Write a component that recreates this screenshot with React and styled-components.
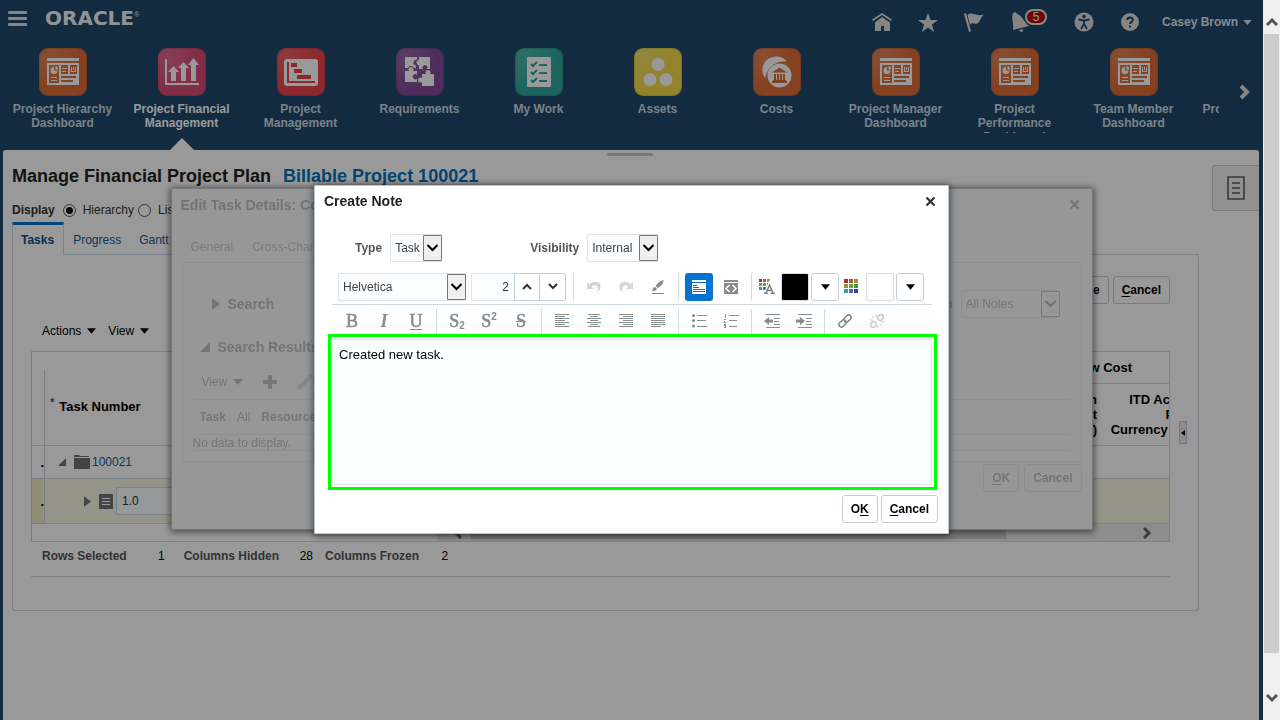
import React from "react";
import styled, { createGlobalStyle, css } from "styled-components";

const Global = createGlobalStyle`
  * { box-sizing: border-box; }
  html, body { margin: 0; }
  body { font: 12px/16px "Liberation Sans", Arial, sans-serif; color: #333; background: #1e486b; }
  button, input, select, textarea { font: inherit; color: inherit; margin: 0; }
  button { cursor: pointer; padding: 0; border: 0; background: none; }
  svg { display: block; flex: none; }
  a { color: inherit; text-decoration: none; }
`;

/* ---------- frame ---------- */
const Frame = styled.div`display: flex; min-height: 100vh;`;
const Shell = styled.div`flex: 1; min-width: 0; display: flex; flex-direction: column; background: #1e486b;`;
const ScrollRail = styled.aside`
  position: sticky; top: 0; width: 17px; height: 100vh; padding: 0 1px; background: #f0f0f0;
  display: flex; flex-direction: column; align-items: center;
`;
const RailArrow = styled.button`
  height: 34px; width: 15px; display: grid; place-items: center; color: #555;
  padding: ${(p) => (p.$down ? "0 0 10px" : "10px 0 0")};
`;
const RailThumb = styled.div`flex: 19; width: 15px; background: #cdcdcd;`;
const RailRest = styled.div`flex: 1;`;

/* ---------- header ---------- */
const TopBar = styled.header`display: flex; justify-content: space-between; height: 44px; padding: 0 11px 0 8px; color: #fff;`;
const Brand = styled.div`display: flex; align-items: center; gap: 18px; height: 36px;`;
const Wordmark = styled.span`
  font: bold 20px/20px "DejaVu Sans", sans-serif; color: #f4f4f4;
  sup { font: 7px/8px "Liberation Sans", sans-serif; vertical-align: 8px; }
`;
const Tools = styled.div`display: flex; align-items: center; color: #dedede;`;
const Tool = styled.button`position: relative; width: 46px; height: 28px; display: grid; place-items: center;`;
const BellTool = styled(Tool)`margin-right: 18px;`;
const Badge = styled.span`
  position: absolute; left: 28px; top: 1px; width: 22px; height: 16px; border: 2px solid #e4e4e4; border-radius: 8px;
  background: #c00000; color: #fff; line-height: 12px; text-align: center;
`;
const User = styled.button`
  display: flex; align-items: center; gap: 5px; margin-left: 9px; font-weight: bold; color: #dde6ee; white-space: nowrap;
`;
const Springboard = styled.nav`display: flex; height: 106px; padding-left: 3px;`;
const AppStrip = styled.div`flex: 1; min-width: 0; display: flex; overflow: hidden;`;
const AppLink = styled.a`
  flex: none; width: 119px; display: flex; flex-direction: column; align-items: center; padding-top: 4px;
  color: ${(p) => (p.$active ? "#fff" : "#ccd8e2")};
`;
const Tile = styled.span`
  width: 48px; height: 48px; border-radius: 9px; display: grid; place-items: center; color: #fff;
  background: radial-gradient(circle at 20% 20%, rgba(255,255,255,.16), rgba(255,255,255,0) 60%), ${(p) => p.$color};
  box-shadow: inset 0 0 2px rgba(0,0,0,.35);
`;
const AppName = styled.span`
  width: 104px; max-height: 31px; margin-top: 6px; overflow: hidden; text-align: center; font-weight: bold; line-height: 14px;
`;
const Callout = styled.span`
  margin-top: 8px; border: 12px solid transparent; border-top: 0; border-bottom-color: #fff;
`;
const More = styled.button`width: 44px; height: 96px; padding-left: 6px; display: grid; place-items: center; color: #dedede;`;

/* ---------- page ---------- */
const Page = styled.main`
  position: relative; flex: 1; display: flex; margin: 0 4px 0 3px; padding-left: 9px; background: #fff;
  border-radius: 3px 3px 0 0;
`;
const Grip = styled.span`
  position: absolute; top: 3px; left: 50%; width: 46px; height: 3px; margin-left: -24px; border-radius: 2px; background: #c6c8d2;
`;
const Work = styled.div`flex: 1; min-width: 0; padding-top: 15px;`;
const Side = styled.div`width: 60px; padding: 15px 0 0 13px;`;
const DrawerTab = styled.button`
  width: 100%; height: 46px; display: grid; place-items: center; border: 1px solid #c9d0d8; border-right: 0;
  border-radius: 3px 0 0 3px; background: #f0f0f0; color: #7b7f83;
`;
const Title = styled.h1`
  margin: 0; display: flex; gap: 12px; font-size: 18px; line-height: 22px; color: #222;
  span { color: #0572bc; }
`;
const DisplayRow = styled.div`display: flex; align-items: center; height: 20px; margin-top: 13px; font-weight: bold;`;
const RadioLabel = styled.label`
  display: flex; align-items: center; gap: 7px; margin-left: 8px; font-weight: normal;
  & + & { margin-left: 4px; }
`;
const Radio = styled.input`
  appearance: none; width: 13px; height: 13px; border: 1px solid #555; border-radius: 50%; background: #fff;
  &:checked { background: radial-gradient(circle, #111 0 3px, #fff 4px); }
`;
const TabRow = styled.div`
  display: flex; height: 33px; margin-top: 2px;
  &::after { content: ""; flex: 1; border-bottom: 1px solid #cdd9e3; }
`;
const Tab = styled.button`
  padding: 0 9px; color: #145c9e; border-top: 3px solid transparent; border-bottom: 1px solid #cdd9e3;
  ${(p) => p.$active && css`
    padding: 0 9px 0 8px; font-weight: bold; color: #0b4f8c; border: 1px solid #cdd9e3; border-bottom: 0; border-top: 3px solid #0572ce;
  `}
`;
const Panel = styled.section`
  display: flex; border: 1px solid #cdd9e3; border-top: 0; border-radius: 0 3px 3px 3px; padding-left: 18px;
`;
const PanelBody = styled.div`flex: 1; min-width: 0; padding: 21px 0 33px;`;
const PanelSide = styled.div`width: 28px; display: flex; align-items: center; padding-left: 9px;`;
const Collapse = styled.button`width: 8px; height: 23px; border: 1px solid #bcc6d0; background: #ececec; display: grid; place-items: center; color: #000;`;
const Actions = styled.div`display: flex; justify-content: flex-end; gap: ${(p) => p.$gap}px;`;
const Button = styled.button`
  height: 28px; padding: 0 8px; border: 1px solid ${(p) => (p.$faded ? "#ececec" : "#c3ccd6")}; border-radius: 3px;
  font-weight: bold; color: ${(p) => (p.$faded ? "#c2c2c2" : "#000")};
  u { text-underline-offset: 2px; }
`;
const MenuBar = styled.div`display: flex; gap: 12px; height: 16px; padding-left: 11px; margin: 19px 0 12px;`;
const MenuButton = styled.button`display: flex; align-items: center; gap: 6px; color: ${(p) => (p.$faded ? "#c2c2c2" : "#000")};`;

/* ---------- task table ---------- */
const line = "1px solid #d3dbe2";
const Grid = styled.div`border: ${line}; border-left-color: #c6ced6; overflow: hidden;`;
const Tasks = styled.table`
  width: calc(100% + 32px); border-collapse: separate; border-spacing: 0; table-layout: fixed; line-height: 15px;
`;
const Head = styled.th`
  padding: 0 5px; font-size: 13px; color: #000; border-bottom: ${line}; text-align: ${(p) => p.$align || "left"};
  white-space: nowrap; height: ${(p) => p.$h}px;
`;
const KeyHead = styled(Head)`padding-top: 16px;`;
const GroupHead = styled(Head)`padding-left: 27px;`;
const LastHead = styled(Head)`padding-right: 8px;`;
const CornerHead = styled(Head)`
  padding: 0; background: linear-gradient(#c9d3dc, #c9d3dc) right bottom / 1px calc(100% - 18px) no-repeat;
`;
const Required = styled.sup`margin-right: 5px; color: #145c9e; font-weight: bold; line-height: 8px;`;
const Row = styled.tr`background: ${(p) => (p.$selected ? "#f7f7e3" : "#fff")};`;
const Mark = styled.th`
  padding: 0; height: ${(p) => p.$h}px; border: solid #c9d3dc; border-width: 0 1px 1px 0; text-align: right; color: #000; font-size: 13px;
  background: ${(p) => (p.$selected ? "#eeeec9" : "#fff")};
`;
const Cell = styled.td`padding: 0 0 0 ${(p) => p.$indent || 0}px; border-bottom: ${line};`;
const Node = styled.div`display: flex; align-items: center; color: #6f7377; a { color: #145c9e; }`;
const NodeGap = styled.span`width: ${(p) => p.$w}px;`;
const NumberInput = styled.input`
  width: 120px; height: 28px; margin-left: 3px; padding: 0 5px; border: 1px solid #ccd9e4; border-radius: 2px; background: #fcfdff; color: #333;
`;
const HScroll = styled.div`display: flex; height: 17px; color: #666;`;
const HBlank = styled.span`flex: 405;`;
const HTrack = styled.div`flex: 732; display: flex; background: #ebebeb;`;
const HArrow = styled.button`width: ${(p) => p.$w}px; padding-left: ${(p) => p.$pad || 0}px; display: grid; place-items: center;`;
const HThumb = styled.span`flex: 535; height: 15px; background: #c8c8c8;`;
const HRest = styled.span`flex: 119;`;
const Status = styled.dl`
  display: flex; align-items: center; margin: 0; height: 35px; padding: 0 0 7px 11px; border-bottom: 1px solid #cdd9e3;
  dt { font-weight: bold; color: #555; }
  dd { margin: 0; color: #000; width: 57px; text-align: right; padding-right: 19px; }
  dd + dt + dd { width: 46px; padding-right: 12px; }
  dd + dt + dd + dt + dd { width: 29px; padding: 0; }
`;

/* ---------- dialogs ---------- */
const Layer = styled.div`
  position: fixed; inset: 0 17px 0 0; padding-bottom: 2px; display: grid; place-items: center;
  background: ${(p) => (p.$dim ? "rgba(0,0,0,.4)" : "transparent")};
`;
const Dialog = styled.section`
  width: ${(p) => p.$width}px; max-width: 100%; border: 1px solid ${(p) => (p.$faded ? "#c3c7cb" : "#bac8d4")};
  border-radius: 1px; background: ${(p) => (p.$faded ? "#fcfcfc" : "#fff")};
  color: ${(p) => (p.$faded ? "#c6c6c6" : "#333")}; padding: 0 10px ${(p) => p.$bottom}px 9px;
  box-shadow: 0 1px 7px 1px rgba(0,0,0,.55);
`;
const DialogHead = styled.header`display: flex; justify-content: space-between; align-items: center; height: 31px; padding-right: 2px;`;
const DialogTitle = styled.h2`margin: 0; font-size: 14px; line-height: 18px; color: ${(p) => (p.$faded ? "#c2c2c2" : "#222")};`;
const Close = styled.button`width: 11px; height: 11px; color: ${(p) => (p.$faded ? "#c2c2c2" : "#333")};`;
const FadedTabs = styled.div`display: flex; gap: 19px; height: 30px; align-items: center; margin-top: 12px; padding-left: 10px; color: #c9d0da;`;
const FadedPanel = styled.div`border: 1px solid #f0f0f0; border-radius: 3px; padding: 27px 10px 10px; margin: 0 0 2px 1px;`;
const Fold = styled.h3`margin: 0; display: flex; align-items: center; gap: 8px; font-size: 14px; line-height: 20px; color: #c2c2c2;`;
const ResultsFold = styled(Fold)`padding-left: 7px;`;
const SearchRow = styled.div`display: flex; justify-content: space-between; height: 28px; padding: 0 11px 0 19px; margin-bottom: 19px;`;
const Field = styled.label`
  display: flex; align-items: center; gap: 8px; font-weight: bold; color: ${(p) => (p.$faded ? "#c6c6c6" : "#555")};
`;
const SelectBox = styled.span`
  position: relative; width: ${(p) => p.$width}px; height: 28px; font-weight: normal;
  svg { position: absolute; right: 0; top: 1px; pointer-events: none; }
`;
const Select = styled.select`
  appearance: none; width: 100%; height: 28px; padding: 0 20px 0 4px; border: 1px solid ${(p) => (p.$faded ? "#ededed" : "#dce2e8")};
  border-radius: 2px; background: ${(p) => (p.$faded ? "#fcfcfc" : "#fcfdff")}; color: ${(p) => (p.$faded ? "#c6c6c6" : "#444")};
`;
const FadedBar = styled.div`display: flex; align-items: center; gap: 20px; height: 35px; margin-top: 8px; padding-left: 9px; border-bottom: 1px solid #f0f0f0;`;
const FadedRow = styled.div`display: flex; align-items: center; gap: 11px; height: ${(p) => p.$h}px; padding-left: ${(p) => p.$pad || 0}px; border-bottom: 1px solid #f0f0f0;`;

const Fields = styled.div`display: flex; gap: 88px; padding: 17px 0 11px 31px;`;
const Editor = styled.div`padding: 0 6px 0 8px;`;
const ToolRow = styled.div`
  display: flex; align-items: center; height: ${(p) => p.$h}px; padding: ${(p) => p.$pad || 0};
  border-bottom: ${(p) => (p.$ruled ? "1px solid #cfdae3" : "0")}; color: #868b90;
`;
const Rule = styled.span`width: 1px; height: ${(p) => p.$h}px; margin: 0 4px; background: #cfdae3;`;
const Stepper = styled.div`
  display: flex; margin: 0 3px 0 5px; height: 28px;
  input { width: 43px; padding: 0 5px; text-align: right; border: 1px solid #dce2e8; border-right: 0; border-radius: 2px 0 0 2px; background: #fcfdff; color: #333; }
  button { width: 26px; border: 1px solid #c3d0db; display: grid; place-items: center; color: #333; }
  button + button { border-left: 0; border-radius: 0 3px 3px 0; }
`;
const Mode = styled.button`
  width: 28px; height: 28px; margin: 0 2px; display: grid; place-items: center; border-radius: 3px;
  ${(p) => p.$on && css`background: #0572ce; color: #fff;`}
`;
const Swatch = styled.button`width: 28px; height: 28px; margin: 0 2px 0 6px; border: 1px solid #dcdfe2; border-radius: 2px; background: ${(p) => p.$color};`;
const Drop = styled.button`width: 28px; height: 28px; border: 1px solid #c3d0db; border-radius: 3px; display: grid; place-items: center; color: #000;`;
const Format = styled.button`
  width: 32px; height: 28px; display: grid; place-items: center; opacity: ${(p) => (p.$off ? 0.45 : 1)};
`;
const Glyph = styled.span`
  font: ${(p) => (p.$italic ? "italic bold" : "normal")} 18px/20px "Liberation Serif", serif; -webkit-text-stroke: ${(p) => (p.$italic ? 0 : "0.6px")};
  text-decoration: ${(p) => p.$line || "none"}; text-decoration-thickness: 1px; text-underline-offset: 2px;
  sub, sup { font: bold 10px/8px "Liberation Sans", sans-serif; -webkit-text-stroke: 0; }
  sub { vertical-align: -2px; } sup { vertical-align: 7px; }
`;
const Highlight = styled.div`margin: 0 1px 5px 4px; border: 3px solid #0f0; padding: 2px 2px 2px 1px; display: flex;`;
const NoteText = styled.textarea`
  flex: 1; min-width: 0; height: 146px; padding: 7px 6px; resize: none; border: 1px solid #dfe3e8; border-radius: 2px; background: #fcfdff;
  font-size: 13px; line-height: 16px; color: #000; outline: 0;
`;

/* ---------- drawings ---------- */
const Caret = ({ w = 10, h = 6 }) => (
  <svg width={w} height={h} viewBox="0 0 10 6"><path d="M0 0h10L5 6z" fill="currentColor" /></svg>
);
const Chevron = ({ d, w = 12, h = 12, s = 2 }) => (
  <svg width={w} height={h} viewBox={`0 0 ${w} ${h}`} fill="none" stroke="currentColor" strokeWidth={s}><path d={d} /></svg>
);
const ComboArrow = ({ faded }) => (
  <svg width="19" height="26" viewBox="0 0 19 26">
    <path d="M.5.5h18v25H.5z" fill={faded ? "#fcfcfc" : "#efefef"} stroke={faded ? "#ccc" : "#777"} />
    <path d="M4.500 10l5 5 5-5" fill="none" stroke={faded ? "#bbb" : "#000"} strokeWidth="2" />
  </svg>
);
const Cross = () => (
  <svg width="11" height="11" viewBox="0 0 11 11"><path d="M1.500 1.500l8 8m0-8l-8 8" stroke="currentColor" strokeWidth="2.200" /></svg>
);
const RightTri = () => <svg width="8" height="12" viewBox="0 0 8 12"><path d="M0 0v12l8-6z" fill="currentColor" /></svg>;
const OpenTri = ({ s = 8 }) => <svg width={s} height={s} viewBox="0 0 8 8"><path d="M8 0v8H0z" fill="currentColor" /></svg>;

const DashIcon = () => (
  <svg width="32" height="28" viewBox="0 0 32 28" fill="currentColor">
    <path d="M0 0h32v3H0z" />
    <path fillRule="evenodd" d="M0 5h32v22H0zM2 7v18h10V7zM14 7v9h7V7zM23 7v9h7V7zM14 18v2h15v-2zM14 22v2h12v-2z" />
    <path d="M7 9a3.500 3.500 0 1 0 3.500 3.500H7zM8.500 8v3.500H11A3 3 0 0 0 8.500 8zM4 19h6v1H4zM4 22h6v1H4zM15 10h5v1h-5zM15 13h4v1h-4zM24 9h1v4h3V9h1v5h-5zM26 9h1v3h-1z" />
  </svg>
);
const ArrowsIcon = () => (
  <svg width="34" height="28" viewBox="0 0 34 28" fill="currentColor">
    <path d="M0 1h2v24h32v2H0zM6 23V14H3l5.500-6L14 14h-3v9zM16 23V10h-3l5.500-6L24 10h-3v13zM26 23V7h-3l5.500-7L34 7h-3v16z" />
  </svg>
);
const GanttIcon = () => (
  <svg width="34" height="27" viewBox="0 0 34 27">
    <rect width="34" height="27" rx="3" fill="#fff" />
    <path d="M3 3h2v19h26v2H3zM7 4h6v4H7zM10 10h8v4h-8zM13 16h14v4H13z" fill="#e9434b" />
  </svg>
);
const PuzzleIcon = () => (
  <svg width="30" height="30" viewBox="0 0 30 30" fill="currentColor">
    <path d="M0 0h12v2.500a3 3 0 0 0-1 6V11H9a3.200 3.200 0 0 0-6 0H0z" />
    <path d="M14 0h11v12h-3a2.500 2.500 0 1 0-4 0h-4V8.500a3 3 0 0 1-1-5.500h1z" />
    <path d="M0 14h4a2.500 2.500 0 1 1 4 0h4v4a2.500 2.500 0 1 0 0 3.500V25H0z" />
    <path d="M17 17h4a2.500 2.500 0 1 1 4 0h4v12H17v-4a2.500 2.500 0 1 1 0-4z" />
  </svg>
);
const CheckIcon = () => (
  <svg width="24" height="30" viewBox="0 0 24 30">
    <rect width="24" height="30" rx="1" fill="#fff" />
    <path d="M4 7l2 2 4-4M4 15l2 2 4-4M4 23l2 2 4-4M12 8h8M12 16h8M12 24h8" fill="none" stroke="#2fa79e" strokeWidth="2" />
  </svg>
);
const AssetsIcon = () => (
  <svg width="30" height="28" viewBox="0 0 30 28" fill="currentColor"><circle cx="15" cy="6.500" r="6.500" /><circle cx="7" cy="21.500" r="6.500" /><circle cx="23" cy="21.500" r="6.500" /></svg>
);
const CostsIcon = () => (
  <svg width="30" height="32" viewBox="0 0 30 32">
    <path d="M3 22A13 13 0 0 1 25 6C15 4 6 10 3 22z" fill="#fff" />
    <circle cx="17.500" cy="19.500" r="12" fill="#fff" />
    <path d="M10 16.500l7.500-5 7.500 5zM12 18h2v6h-2zM15 18h2v6h-2zM18 18h2v6h-2zM21 18h2v6h-2zM11 24h13v1h1v2H10v-2h1z" fill="#de6b35" />
  </svg>
);
const HomeIcon = () => (
  <svg width="20" height="19" viewBox="0 0 20 19" fill="currentColor"><path d="M10 0l10 6.500-1 1.500-9-6-9 6-1-1.500z" /><path d="M10 4l8 5.500V18h-6v-5H9v5H3V9.500z" /></svg>
);
const StarIcon = () => (
  <svg width="20" height="19" viewBox="0 0 20 19" fill="currentColor"><path d="M10 0l2.500 7H20l-6 4.500L16 19l-6-4.500L4 19l2-7.500L0 7h7.500z" /></svg>
);
const FlagIcon = () => (
  <svg width="20" height="19" viewBox="0 0 20 19" fill="currentColor"><path d="M0 1l2-1 5 18-2 1zM3.500 2C8-2 11 4 20 1.500c-4 3-3 7-7 9-3 1-5-2-7 1.500z" /></svg>
);
const BellIcon = () => (
  <svg width="20" height="20" viewBox="0 0 20 20" fill="currentColor"><path d="M3 1c2-2 4 0 4 1 5 1 7 8 12 12L3 18C4 12 1 6 3 1zM9 18l4-1c1 3-3 4-4 1z" /></svg>
);
const AccessIcon = () => (
  <svg width="20" height="20" viewBox="0 0 20 20">
    <circle cx="10" cy="10" r="9.500" fill="currentColor" /><circle cx="10" cy="4.500" r="1.800" fill="#1e486b" />
    <path d="M4.500 7.500L10 8.500l5.500-1M10 8v4l-3 5M10 12l3 5" fill="none" stroke="#1e486b" strokeWidth="1.800" />
  </svg>
);
const HelpIcon = () => (
  <svg width="18" height="18" viewBox="0 0 18 18">
    <circle cx="9" cy="9" r="9" fill="currentColor" />
    <path d="M6.300 7c0-3.500 5.500-3.500 5.500 0 0 2-2.800 2-2.800 4M9 12.500v2" fill="none" stroke="#1e486b" strokeWidth="2" />
  </svg>
);
const Lines = ({ rows }) => (
  <svg width="14" height="14" viewBox="0 0 14 14" fill="currentColor">
    {rows.map(([x, w], i) => <rect key={i} x={x} y={i * 2} width={w} height="1" />)}
  </svg>
);
const DotGrid = ({ letter }) => {
  const c = ["#9b3535", "#a5603a", "#a38c34", "#8b9838", "#7c9a38", "#3d9b3d", "#3a9b98", "#3b6fae", "#3a3fa0"];
  return (
    <svg width="16" height="15" viewBox="0 0 16 15">
      {c.map((f, i) => {
        const s = letter ? 3 : 4, p = letter ? 4 : 5;
        if (letter && i === 8) return null;
        return <rect key={f} x={(i % 3) * p} y={Math.floor(i / 3) * p} width={s} height={s} fill={f} />;
      })}
      {letter && <path d="M7 14l3.500-8 3.500 8" fill="none" stroke="#fff" strokeWidth="4" />}
      {letter && <path d="M5 14.500h4M11.500 14.500H16M7 14l3.500-8 3.500 8M8 11.500h5" fill="none" stroke="#777c81" strokeWidth="1.500" />}
    </svg>
  );
};
const UndoIcon = ({ flip }) => (
  <svg width="14" height="14" viewBox="0 0 14 14"><g transform={flip ? "matrix(-1 0 0 1 14 0)" : undefined}>
    <path d="M0 2v7h7L4.500 6.500C7 4 11 5 11 9l-1 4c6-5 4-12-3-11-2 0-3.500 1-4.500 2.500z" fill="#d3d5d7" /></g></svg>
);
const BrushIcon = () => (
  <svg width="14" height="14" viewBox="0 0 14 14" fill="currentColor"><path d="M12.500 0c0 4-3 6-5.500 8L4.500 6c2-3 4-5 8-6zM4 7l2 2c-1 2-3 2-5 2 1-2 1-4 3-4zM1 13h12v1H1z" /></svg>
);
const RichIcon = () => (
  <svg width="14" height="14" viewBox="0 0 14 14" fill="currentColor"><path fillRule="evenodd" d="M0 0h14v2H0zM0 3h14v11H0zM1 5v1h4V5zM1 7v1h6V7zM1 9v1h12V9zM1 11v1h12v-1z" /></svg>
);
const CodeIcon = () => (
  <svg width="14" height="14" viewBox="0 0 14 14"><path d="M0 0h14v2H0zM0 3h14v11H0z" fill="currentColor" /><path d="M5.500 5L2 8.500 5.500 12M8.500 5L12 8.500 8.500 12" fill="none" stroke="#fff" strokeWidth="1.500" /></svg>
);
const ListIcon = ({ num }) => (
  <svg width="15" height="14" viewBox="0 0 15 14" fill="currentColor">
    <path d={num ? "M5 1h10v1H5zM5 6h8v1H5zM5 12h8v1H5z" : "M5 1h10v1H5zM5 6h9v1H5zM5 12h10v1H5z"} />
    {num ? <path d="M1 0h1v4H1zM0 5h2v1H1v2h1v1H0V7h1V6H0zM0 10h2v4H0v-1h1v-1H0z" />
      : <><circle cx="1.500" cy="1.500" r="1.500" /><circle cx="1.500" cy="6.500" r="1.500" /><circle cx="1.500" cy="12" r="1.500" /></>}
  </svg>
);
const IndentIcon = ({ out }) => (
  <svg width="16" height="14" viewBox="0 0 16 14" fill="currentColor">
    <path d="M2 0h14v1H2zM10 4h6v1h-6zM10 7h5v1h-5zM10 10h6v1h-6zM2 13h14v1H2z" />
    <path d={out ? "M0 7l5-4v2.500h4v3H5V11z" : "M9 7L4 3v2.500H0v3h4V11z"} />
  </svg>
);
const LinkIcon = ({ broken }) => (
  <svg width="14" height="14" viewBox="0 0 14 14" fill="none" stroke="currentColor" strokeWidth="1.600">
    <g transform="rotate(-45 7 7)">
      <rect x={broken ? -1 : -0.5} y="4.500" width={broken ? 6 : 8} height="5" rx="2.500" />
      <rect x={broken ? 9 : 6.5} y="4.500" width={broken ? 6 : 8} height="5" rx="2.500" />
    </g>
    {broken ? <path d="M2 2l2 2M6 0v3M0 6h3M12 12l-2-2M8 14v-3M14 8h-3" strokeWidth="1" /> : null}
  </svg>
);
const FolderIcon = () => <svg width="16" height="14" viewBox="0 0 16 14" fill="currentColor"><path d="M0 0h5l1 1h9v1H0zM0 3h16v11H0z" /></svg>;
const TaskIcon = () => <svg width="14" height="15" viewBox="0 0 14 15"><path d="M0 0h14v15H0z" fill="currentColor" /><path d="M3 4.500h8M3 7.500h8M3 10.500h8" stroke="#fff" /></svg>;
const DrawerIcon = () => <svg width="18" height="24" viewBox="0 0 18 24" fill="none" stroke="currentColor" strokeWidth="2"><path d="M1 1h16v22H1zM5 7h8M5 12h8M5 17h8" /></svg>;
const PlusIcon = () => <svg width="14" height="14" viewBox="0 0 14 14"><path d="M7 0v14M0 7h14" stroke="#c6c6c6" strokeWidth="4" /></svg>;
const PencilIcon = () => <svg width="16" height="16" viewBox="0 0 16 16" fill="#e2e2e2"><path d="M0 16l1-4L10 3l3 3-9 9zM11 2l2-2 3 3-2 2z" /></svg>;

const APPS = [
  ["Project Hierarchy Dashboard", "#de6b35", DashIcon],
  ["Project Financial Management", "#da4b78", ArrowsIcon],
  ["Project Management", "#e9434b", GanttIcon],
  ["Requirements", "#824b96", PuzzleIcon],
  ["My Work", "#2fa79e", CheckIcon],
  ["Assets", "#f5da48", AssetsIcon],
  ["Costs", "#de6b35", CostsIcon],
  ["Project Manager Dashboard", "#de6b35", DashIcon],
  ["Project Performance Dashboard", "#de6b35", DashIcon],
  ["Team Member Dashboard", "#de6b35", DashIcon],
  ["Project Contracts", "#de6b35", DashIcon],
];
const LEFT = [[0, 14], [0, 10], [0, 14], [0, 10], [0, 14], [0, 10], [0, 14]];
const CENTER = [[1, 12], [3, 8], [0, 14], [3, 8], [0, 14], [3, 8], [1, 12]];
const RIGHT = [[0, 14], [4, 10], [0, 14], [4, 10], [0, 14], [4, 10], [0, 14]];
const FULL = [[0, 14], [0, 14], [0, 14], [0, 14], [0, 14], [0, 14], [0, 10]];

function Combo({ width, value, faded, label }) {
  return (
    <SelectBox $width={width}>
      <Select $faded={faded} defaultValue={value} aria-label={label}><option>{value}</option></Select>
      <ComboArrow faded={faded} />
    </SelectBox>
  );
}

function Header() {
  return (
    <>
      <TopBar>
        <Brand>
          <button aria-label="Navigator"><svg width="19" height="15" viewBox="0 0 19 15" fill="#dedede"><rect width="19" height="3" rx="1" /><rect y="6" width="19" height="3" rx="1" /><rect y="12" width="19" height="3" rx="1" /></svg></button>
          <Wordmark>ORACLE<sup>®</sup></Wordmark>
        </Brand>
        <Tools>
          <Tool aria-label="Home"><HomeIcon /></Tool>
          <Tool aria-label="Favorites"><StarIcon /></Tool>
          <Tool aria-label="Watchlist"><FlagIcon /></Tool>
          <BellTool aria-label="Notifications"><BellIcon /><Badge>5</Badge></BellTool>
          <Tool aria-label="Accessibility"><AccessIcon /></Tool>
          <Tool aria-label="Help"><HelpIcon /></Tool>
          <User>Casey Brown <Caret w={9} h={5} /></User>
        </Tools>
      </TopBar>
      <Springboard>
        <AppStrip>
          {APPS.map(([name, color, Icon], i) => (
            <AppLink href="#" key={name} $active={i === 1}>
              <Tile $color={color}><Icon /></Tile>
              <AppName>{name}</AppName>
              {i === 1 && <Callout />}
            </AppLink>
          ))}
        </AppStrip>
        <More aria-label="Next"><Chevron w={11} h={16} s={4} d="M2 2l6 6-6 6" /></More>
      </Springboard>
    </>
  );
}

function TaskTable() {
  return (
    <Grid>
      <Tasks>
        <colgroup><col style={{ width: 13 }} /><col /><col style={{ width: 120 }} /><col style={{ width: 99 }} /></colgroup>
        <thead>
          <tr>
            <CornerHead rowSpan={2} />
            <KeyHead rowSpan={2}><Required>*</Required>Task Number</KeyHead>
            <GroupHead colSpan={2} $h={32} $align="center">Raw Cost</GroupHead>
          </tr>
          <tr>
            <Head $h={62} $align="right">Planned in<br />Project<br />Currency ($)</Head>
            <LastHead $align="right">ITD Actual<br />Plan<br />Currency (Fr)</LastHead>
          </tr>
        </thead>
        <tbody>
          <Row>
            <Mark $h={33}>.</Mark>
            <Cell $indent={13}><Node><OpenTri /><NodeGap $w={8} /><FolderIcon /><NodeGap $w={2} /><a href="#">100021</a></Node></Cell>
            <Cell /><Cell />
          </Row>
          <Row $selected>
            <Mark $h={45} $selected>.</Mark>
            <Cell $indent={39}><Node><svg width="7" height="11" viewBox="0 0 8 12"><path d="M0 0v12l8-6z" fill="currentColor" /></svg><NodeGap $w={8} /><TaskIcon /><NumberInput defaultValue="1.0" aria-label="Task number" /></Node></Cell>
            <Cell /><Cell />
          </Row>
        </tbody>
      </Tasks>
      <HScroll>
        <HBlank />
        <HTrack>
          <HArrow $w={34} $pad={8} aria-label="Scroll left"><Chevron w={10} h={12} s={3} d="M8 1L3 6l5 5" /></HArrow>
          <HThumb /><HRest />
          <HArrow $w={44} aria-label="Scroll right"><Chevron w={10} h={12} s={3} d="M2 1l5 5-5 5" /></HArrow>
        </HTrack>
      </HScroll>
    </Grid>
  );
}

function PlanPage() {
  return (
    <Page>
      <Grip />
      <Work>
        <Title>Manage Financial Project Plan <span>Billable Project 100021</span></Title>
        <DisplayRow>
          Display
          <RadioLabel><Radio type="radio" name="display" defaultChecked />Hierarchy</RadioLabel>
          <RadioLabel><Radio type="radio" name="display" />List</RadioLabel>
        </DisplayRow>
        <TabRow>
          <Tab $active>Tasks</Tab><Tab>Progress</Tab><Tab>Gantt</Tab>
        </TabRow>
        <Panel>
          <PanelBody>
            <Actions $gap={4}>
              <Button>Save and Close</Button>
              <Button><u>C</u>ancel</Button>
            </Actions>
            <MenuBar><MenuButton>Actions <Caret w={9} /></MenuButton><MenuButton>View <Caret w={9} /></MenuButton></MenuBar>
            <TaskTable />
            <Status>
              <dt>Rows Selected</dt><dd>1</dd><dt>Columns Hidden</dt><dd>28</dd><dt>Columns Frozen</dt><dd>2</dd>
            </Status>
          </PanelBody>
          <PanelSide><Collapse aria-label="Expand"><svg width="4" height="6" viewBox="0 0 4 6"><path d="M4 0v6L0 3z" /></svg></Collapse></PanelSide>
        </Panel>
      </Work>
      <Side><DrawerTab aria-label="Details"><DrawerIcon /></DrawerTab></Side>
    </Page>
  );
}

function EditTaskDialog() {
  return (
    <Dialog $width={922} $bottom={37} $faded aria-label="Edit Task Details">
      <DialogHead><DialogTitle $faded>Edit Task Details: Cost</DialogTitle><Close $faded aria-label="Close details"><Cross /></Close></DialogHead>
      <FadedTabs><a href="#">General</a><a href="#">Cross-Charge</a></FadedTabs>
      <FadedPanel>
        <SearchRow>
          <Fold><RightTri />Search</Fold>
          <Field $faded>Saved Search <Combo width={99} value="All Notes" faded label="Saved search" /></Field>
        </SearchRow>
        <ResultsFold><OpenTri s={10} />Search Results</ResultsFold>
        <FadedBar><MenuButton $faded>View <Caret /></MenuButton><PlusIcon /><PencilIcon /></FadedBar>
        <FadedRow $h={35} $pad={7}><b>Task</b><span>All</span><b>Resource</b></FadedRow>
        <FadedRow $h={16}>No data to display.</FadedRow>
      </FadedPanel>
      <Actions $gap={5}><Button $faded><u>O</u>K</Button><Button $faded>Cancel</Button></Actions>
    </Dialog>
  );
}

function CreateNoteDialog() {
  return (
    <Dialog $width={635} $bottom={10} role="dialog" aria-label="Create Note">
      <DialogHead><DialogTitle>Create Note</DialogTitle><Close aria-label="Close"><Cross /></Close></DialogHead>
      <Fields>
        <Field>Type <Combo width={52} value="Task" /></Field>
        <Field>Visibility <Combo width={71} value="Internal" /></Field>
      </Fields>
      <Editor>
        <ToolRow $h={32} $ruled $pad="0 0 3px 6px">
          <Combo width={128} value="Helvetica" label="Font" />
          <Stepper>
            <input defaultValue="2" aria-label="Font size" />
            <button aria-label="Larger"><Chevron w={10} h={7} d="M1 6l4-4 4 4" /></button>
            <button aria-label="Smaller"><Chevron w={10} h={7} d="M1 1l4 4 4-4" /></button>
          </Stepper>
          <Rule $h={28} />
          <Format aria-label="Undo"><UndoIcon /></Format>
          <Format aria-label="Redo"><UndoIcon flip /></Format>
          <Format aria-label="Clear styles"><BrushIcon /></Format>
          <Rule $h={28} />
          <Mode $on aria-label="Rich text mode"><RichIcon /></Mode>
          <Mode aria-label="Source mode"><CodeIcon /></Mode>
          <Rule $h={28} />
          <NodeGap $w={3} />
          <DotGrid letter />
          <Swatch $color="#000" aria-label="Text color" />
          <Drop aria-label="Choose text color"><Caret w={9} /></Drop>
          <NodeGap $w={5} />
          <DotGrid />
          <Swatch $color="#fff" aria-label="Background color" />
          <Drop aria-label="Choose background color"><Caret w={9} /></Drop>
        </ToolRow>
        <ToolRow $h={29} $pad="4px 0 0 4px">
          <Format aria-label="Bold"><Glyph>B</Glyph></Format>
          <Format aria-label="Italic"><Glyph $italic>I</Glyph></Format>
          <Format aria-label="Underline"><Glyph $line="underline">U</Glyph></Format>
          <Rule $h={25} />
          <Format aria-label="Subscript"><Glyph>S<sub>2</sub></Glyph></Format>
          <Format aria-label="Superscript"><Glyph>S<sup>2</sup></Glyph></Format>
          <Format aria-label="Strikethrough"><Glyph $line="line-through">S</Glyph></Format>
          <Rule $h={25} />
          <Format aria-label="Align left"><Lines rows={LEFT} /></Format>
          <Format aria-label="Align center"><Lines rows={CENTER} /></Format>
          <Format aria-label="Align right"><Lines rows={RIGHT} /></Format>
          <Format aria-label="Justify"><Lines rows={FULL} /></Format>
          <Rule $h={25} />
          <Format aria-label="Bulleted list"><ListIcon /></Format>
          <Format aria-label="Numbered list"><ListIcon num /></Format>
          <Rule $h={25} />
          <Format aria-label="Outdent"><IndentIcon out /></Format>
          <Format aria-label="Indent"><IndentIcon /></Format>
          <Rule $h={25} />
          <Format aria-label="Add link"><LinkIcon /></Format>
          <Format $off aria-label="Remove link"><LinkIcon broken /></Format>
        </ToolRow>
      </Editor>
      <Highlight><NoteText aria-label="Note text" defaultValue="Created new task." /></Highlight>
      <Actions $gap={3}><Button>O<u>K</u></Button><Button><u>C</u>ancel</Button></Actions>
    </Dialog>
  );
}

export default function App() {
  return (
    <>
      <Global />
      <Frame>
        <Shell><Header /><PlanPage /></Shell>
        <ScrollRail>
          <RailArrow aria-label="Scroll up"><Chevron w={12} h={9} s={3} d="M1 7l5-5 5 5" /></RailArrow>
          <RailThumb /><RailRest />
          <RailArrow $down aria-label="Scroll down"><Chevron w={12} h={9} s={3} d="M1 1l5 5 5-5" /></RailArrow>
        </ScrollRail>
      </Frame>
      <Layer><EditTaskDialog /></Layer>
      <Layer $dim><CreateNoteDialog /></Layer>
    </>
  );
}
